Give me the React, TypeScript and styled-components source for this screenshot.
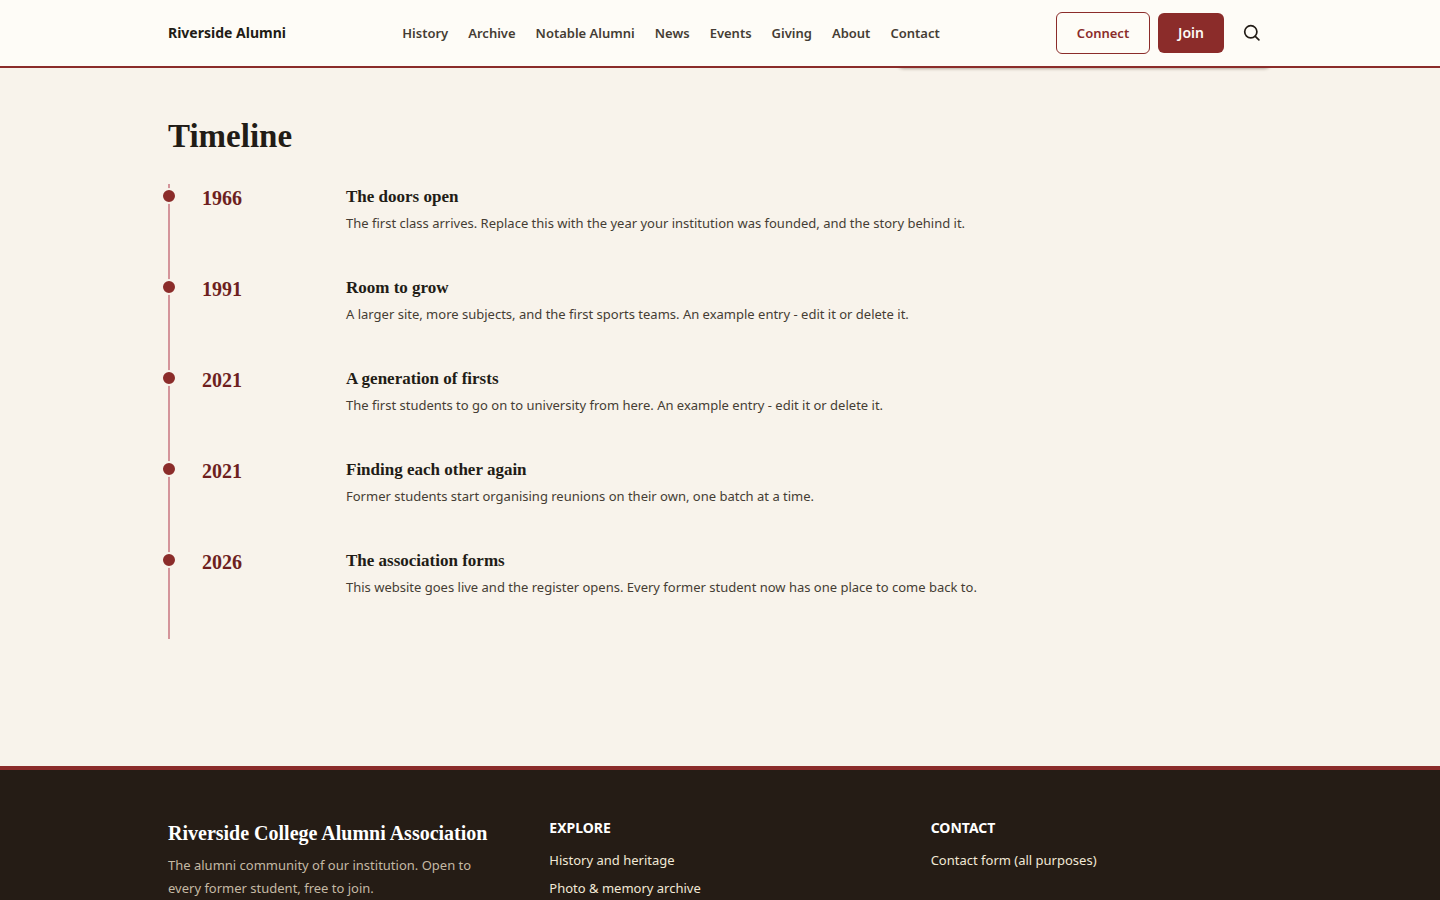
import React from "react";
import styled, { createGlobalStyle } from "styled-components";

const sans = `"Noto Sans", "Open Sans", sans-serif`;
const serif = `"Palatino Linotype", Palatino, "Liberation Serif", serif`;

const GlobalStyle = createGlobalStyle`
  *, *::before, *::after { box-sizing: border-box; }
  body { margin: 0; background: #f8f3eb; color: #221c16; font: 400 13px/24px ${sans}; }
  h1, h2, h3, p, ul, ol { margin: 0; padding: 0; }
  ul, ol { list-style: none; }
  a { color: inherit; text-decoration: none; }
`;

const Page = styled.div`
  display: flex;
  flex-direction: column;
  height: 100vh;
  overflow: hidden;
`;

const Container = styled.div`
  width: 100%;
  max-width: 1152px;
  margin: 0 auto;
  padding: 0 24px;
`;

const Header = styled.header`
  position: relative;
  z-index: 1;
  flex: none;
  background: #fefcf7;
  border-bottom: 2px solid #8b2c2a;
`;

const HeaderRow = styled(Container)`
  display: flex;
  align-items: center;
  justify-content: space-between;
  height: 66px;
`;

const Brand = styled.a`
  font-weight: 700;
  font-size: 14px;
`;

const NavList = styled.ul`
  display: flex;
  gap: 20px;
`;

const NavLink = styled.a`
  font-weight: 600;
  color: #453d34;
`;

const Actions = styled.div`
  display: flex;
  align-items: center;
  gap: 8px;
`;

const Button = styled.button<{ $outline?: boolean }>`
  height: ${(p) => (p.$outline ? 42 : 40)}px;
  width: ${(p) => (p.$outline ? 94 : 66)}px;
  padding: 0;
  border: ${(p) => (p.$outline ? "1px solid #8b2c2a" : "0")};
  border-radius: 6px;
  background: ${(p) => (p.$outline ? "transparent" : "#8b2c2a")};
  color: ${(p) => (p.$outline ? "#8b2c2a" : "#fefcf7")};
  font: 600 ${(p) => (p.$outline ? 13 : 14)}px/20px ${sans};
`;

const IconButton = styled.button`
  display: grid;
  place-items: center;
  width: 40px;
  height: 40px;
  padding: 0;
  border: 0;
  background: none;
  color: #221c16;
`;

const Main = styled.main`
  flex: none;
  padding: 46px 0 127px;
`;

const Section = styled(Container)`
  position: relative;
`;

/* Foot of the card that has scrolled behind the header. */
const ScrolledCard = styled.div`
  position: absolute;
  right: 24px;
  bottom: calc(100% + 46px);
  width: 376px;
  height: 40px;
  border-radius: 8px;
  background: #fefcf7;
  box-shadow: 0 1px 3px rgba(60, 40, 20, 0.35);
`;

const Heading = styled.h1`
  margin-bottom: 26px;
  font: 700 33px/44px ${serif};
`;

const Timeline = styled.ol`
  border-left: 2px solid #d4949a;
`;

const Entry = styled.li`
  position: relative;
  display: grid;
  grid-template-columns: 128px 1fr;
  column-gap: 16px;
  height: 91px;
  padding-left: 32px;

  &::before {
    content: "";
    position: absolute;
    top: 4px;
    left: -9px;
    width: 16px;
    height: 16px;
    border: 2px solid #f8f3eb;
    border-radius: 50%;
    background: #8b2c2a;
  }
`;

const Year = styled.p`
  font: 700 20px/28px ${serif};
  color: #6e1f20;
`;

const EntryTitle = styled.h2`
  font: 700 17px/26px ${serif};
`;

const EntryText = styled.p`
  line-height: 26px;
  color: #453d34;
`;

const Footer = styled.footer`
  flex: none;
  background: #251c15;
  border-top: 4px solid #8b2c2a;
  padding: 48px 0;
`;

const FooterGrid = styled(Container)`
  display: grid;
  grid-template-columns: repeat(3, 1fr);
  gap: 40px;
`;

const FooterBrand = styled.h2`
  margin-bottom: 6px;
  font: 700 20px/30px ${serif};
  white-space: nowrap;
  color: #ffffff;
`;

const FooterText = styled.p`
  max-width: 320px;
  line-height: 23px;
  color: #c4b9a4;
`;

const FooterHeading = styled.h2`
  margin-bottom: 8px;
  font: 700 14px/20px ${sans};
  text-transform: uppercase;
  color: #ffffff;
`;

const FooterLink = styled.a`
  display: block;
  line-height: 28px;
  color: #f1e8d6;
`;

const navItems = ["History", "Archive", "Notable Alumni", "News", "Events", "Giving", "About", "Contact"];

const entries = [
  { year: "1966", title: "The doors open", text: "The first class arrives. Replace this with the year your institution was founded, and the story behind it." },
  { year: "1991", title: "Room to grow", text: "A larger site, more subjects, and the first sports teams. An example entry - edit it or delete it." },
  { year: "2021", title: "A generation of firsts", text: "The first students to go on to university from here. An example entry - edit it or delete it." },
  { year: "2021", title: "Finding each other again", text: "Former students start organising reunions on their own, one batch at a time." },
  { year: "2026", title: "The association forms", text: "This website goes live and the register opens. Every former student now has one place to come back to." },
];

const SearchIcon = () => (
  <svg width="18" height="18" viewBox="0 0 18 18" fill="none" stroke="currentColor" strokeWidth="1.7" strokeLinecap="round" aria-hidden="true">
    <circle cx="7.8" cy="7.8" r="6.1" />
    <path d="m12.3 12.3 3.6 3.6" />
  </svg>
);

export default function App() {
  return (
    <Page>
      <GlobalStyle />
      <Header>
        <HeaderRow>
          <Brand href="#">Riverside Alumni</Brand>
          <nav aria-label="Main">
            <NavList>
              {navItems.map((item) => (
                <li key={item}><NavLink href="#">{item}</NavLink></li>
              ))}
            </NavList>
          </nav>
          <Actions>
            <Button type="button" $outline>Connect</Button>
            <Button type="button">Join</Button>
            <IconButton type="button" aria-label="Search"><SearchIcon /></IconButton>
          </Actions>
        </HeaderRow>
      </Header>
      <Main>
        <Section>
          <ScrolledCard />
          <Heading>Timeline</Heading>
          <Timeline>
            {entries.map((e) => (
              <Entry key={e.title}>
                <Year>{e.year}</Year>
                <div>
                  <EntryTitle>{e.title}</EntryTitle>
                  <EntryText>{e.text}</EntryText>
                </div>
              </Entry>
            ))}
          </Timeline>
        </Section>
      </Main>
      <Footer>
        <FooterGrid>
          <div>
            <FooterBrand>Riverside College Alumni Association</FooterBrand>
            <FooterText>The alumni community of our institution. Open to every former student, free to join.</FooterText>
          </div>
          <nav aria-label="Explore">
            <FooterHeading>Explore</FooterHeading>
            <FooterLink href="#">History and heritage</FooterLink>
            <FooterLink href="#">Photo &amp; memory archive</FooterLink>
          </nav>
          <nav aria-label="Contact">
            <FooterHeading>Contact</FooterHeading>
            <FooterLink href="#">Contact form (all purposes)</FooterLink>
          </nav>
        </FooterGrid>
      </Footer>
    </Page>
  );
}
